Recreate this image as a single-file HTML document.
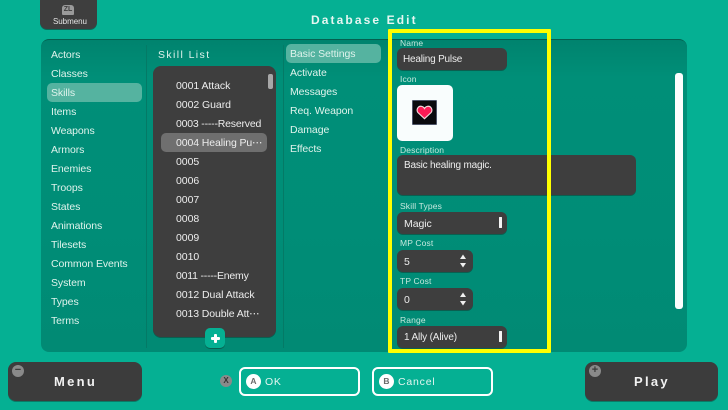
<!DOCTYPE html>
<html><head><meta charset="utf-8"><style>
*{box-sizing:border-box;margin:0;padding:0}
html,body{width:728px;height:410px;overflow:hidden}
body{position:relative;background:#05b093;font-family:"Liberation Sans","DejaVu Sans",sans-serif;color:#e6f4ef}
.a{position:absolute}
.t{position:absolute;font-size:10.5px;line-height:14px;letter-spacing:-.08px;white-space:nowrap;color:#dff3ec}
.l{position:absolute;font-size:8.5px;line-height:10px;letter-spacing:.14px;color:#c5e8de;left:400px;white-space:nowrap}
.box{position:absolute;background:#3e3e3e;border-radius:6px;box-shadow:0 1px 0 #0a5f50}
.v{position:absolute;font-size:10.5px;line-height:14px;letter-spacing:-.05px;margin-top:1px;color:#ededed;white-space:nowrap}
.bar{position:absolute;width:3px;height:11px;background:#f4f4f4;left:499px;border-radius:.5px}
.btn{position:absolute;background:#3c3c3c;border-radius:8px;box-shadow:0 1px 0 #0a7a66;height:39px;top:362px}
.big{position:absolute;font-size:13px;font-weight:bold;letter-spacing:2.3px;color:#f2f2f2;line-height:18px;white-space:nowrap}
.dot{position:absolute;width:12px;height:12px;border-radius:50%;background:#8a8a8a;color:#3c3c3c;font-size:11px;font-weight:bold;line-height:11px;text-align:center}
.ol{position:absolute;top:367px;height:29px;width:121px;border:2px solid #fff;border-radius:6px}
.c{position:absolute;width:15px;height:15px;border-radius:50%;background:#fff;color:#6a6a6a;font-size:8.5px;font-weight:bold;line-height:15px;text-align:center;top:374px}
</style></head><body>

<div class="a" style="left:40px;top:-6px;width:57px;height:35px;background:#3e3e3e;border-radius:7px;box-shadow:0 1px 0 #0a6b5a"></div>
<div class="a" style="left:62px;top:5px;width:12px;height:10px;background:#9a9a9a;border-radius:3px 3px 1px 1px;color:#3e3e3e;font-size:7px;font-weight:bold;line-height:10px;text-align:center">ZL</div>
<div class="t" style="left:53px;top:15px;font-size:8px;letter-spacing:-.05px;color:#e6e6e6">Submenu</div>

<div class="t" style="left:311px;top:12px;font-size:12px;line-height:16px;font-weight:bold;letter-spacing:2.1px;color:#e6f6f1">Database Edit</div>

<div class="a" style="left:41px;top:39px;width:646px;height:313px;border-radius:8px;background:linear-gradient(#00836e,#008f78 12%,#008d77 60%,#018a74);border-top:1px solid #04604f"></div>
<div class="a" style="left:146px;top:45px;width:1px;height:303px;background:#047a66"></div>
<div class="a" style="left:283px;top:45px;width:1px;height:303px;background:#047a66"></div>

<div class="a" style="left:47px;top:83px;width:95px;height:19px;border-radius:5px;background:#55b3a0"></div>
<div class="t" style="left:51px;top:48px">Actors</div>
<div class="t" style="left:51px;top:67px">Classes</div>
<div class="t" style="left:51px;top:86px">Skills</div>
<div class="t" style="left:51px;top:105px">Items</div>
<div class="t" style="left:51px;top:124px">Weapons</div>
<div class="t" style="left:51px;top:143px">Armors</div>
<div class="t" style="left:51px;top:162px">Enemies</div>
<div class="t" style="left:51px;top:181px">Troops</div>
<div class="t" style="left:51px;top:200px">States</div>
<div class="t" style="left:51px;top:219px">Animations</div>
<div class="t" style="left:51px;top:238px">Tilesets</div>
<div class="t" style="left:51px;top:257px">Common Events</div>
<div class="t" style="left:51px;top:276px">System</div>
<div class="t" style="left:51px;top:295px">Types</div>
<div class="t" style="left:51px;top:314px">Terms</div>

<div class="t" style="left:158px;top:48px;letter-spacing:1.4px">Skill List</div>
<div class="box" style="left:153px;top:66px;width:123px;height:271px;border-radius:8px"></div>
<div class="a" style="left:161px;top:133px;width:106px;height:19px;border-radius:5px;background:#6f6f6f"></div>
<div class="a" style="left:268px;top:74px;width:5px;height:15px;border-radius:2px;background:#a8a8a8"></div>
<div class="v" style="left:176px;top:78px">0001 Attack</div>
<div class="v" style="left:176px;top:97px">0002 Guard</div>
<div class="v" style="left:176px;top:116px;letter-spacing:-.2px">0003 -----Reserved</div>
<div class="v" style="left:176px;top:135px;letter-spacing:-.1px">0004 Healing Pu⋯</div>
<div class="v" style="left:176px;top:154px">0005</div>
<div class="v" style="left:176px;top:173px">0006</div>
<div class="v" style="left:176px;top:192px">0007</div>
<div class="v" style="left:176px;top:211px">0008</div>
<div class="v" style="left:176px;top:230px">0009</div>
<div class="v" style="left:176px;top:249px">0010</div>
<div class="v" style="left:176px;top:268px;letter-spacing:-.2px">0011 -----Enemy</div>
<div class="v" style="left:176px;top:287px">0012 Dual Attack</div>
<div class="v" style="left:176px;top:306px;letter-spacing:-.1px">0013 Double Att⋯</div>
<div class="a" style="left:205px;top:328px;width:20px;height:20px;border-radius:5px;background:#05b093;box-shadow:0 1px 0 #0a5f50"></div>
<div class="a" style="left:210.5px;top:336.5px;width:9px;height:3px;background:#fff;border-radius:1px"></div>
<div class="a" style="left:213.5px;top:333.5px;width:3px;height:9px;background:#fff;border-radius:1px"></div>

<div class="a" style="left:286px;top:44px;width:95px;height:19px;border-radius:5px;background:#55b3a0"></div>
<div class="t" style="left:290px;top:47px">Basic Settings</div>
<div class="t" style="left:290px;top:66px">Activate</div>
<div class="t" style="left:290px;top:85px">Messages</div>
<div class="t" style="left:290px;top:104px">Req. Weapon</div>
<div class="t" style="left:290px;top:123px">Damage</div>
<div class="t" style="left:290px;top:142px">Effects</div>

<div class="l" style="top:38px">Name</div>
<div class="box" style="left:397px;top:48px;width:110px;height:22px"></div>
<div class="v" style="left:403px;top:52px;font-size:10px;letter-spacing:-.2px">Healing Pulse</div>

<div class="l" style="top:74px">Icon</div>
<div class="a" style="left:397px;top:85px;width:56px;height:56px;background:#f9fdfd;border-radius:5px"></div>
<div class="a" style="left:412px;top:100px;width:25px;height:25px;background:#0a0a0e;border:1.5px solid #4d5468;border-radius:1px"></div>
<svg class="a" style="left:416px;top:105px" width="17" height="15" viewBox="0 0 19 17"><path d="M9.5 15.5 L2 8.5 Q0.5 6.5 1.5 4 Q3 1 6 1.5 Q8.5 2 9.5 4 Q10.5 2 13 1.5 Q16 1 17.5 4 Q18.5 6.5 17 8.5 Z" fill="#fb1a55" stroke="#f5d7dc" stroke-width="1.3"/></svg>

<div class="l" style="top:145px">Description</div>
<div class="box" style="left:397px;top:155px;width:239px;height:40px"></div>
<div class="v" style="left:404px;top:158px;font-size:10px;letter-spacing:-.2px">Basic healing magic.</div>

<div class="l" style="top:201px">Skill Types</div>
<div class="box" style="left:397px;top:212px;width:110px;height:22px"></div>
<div class="v" style="left:404px;top:216px">Magic</div>
<div class="bar" style="top:217px"></div>

<div class="l" style="top:238px">MP Cost</div>
<div class="box" style="left:397px;top:250px;width:76px;height:22px"></div>
<div class="v" style="left:404px;top:254px">5</div>
<svg class="a" style="left:459px;top:254px" width="8" height="14" viewBox="0 0 8 14"><path d="M4 0.5 L7 5 H1Z M4 13.5 L1 9 H7Z" fill="#f0f0f0"/></svg>

<div class="l" style="top:276px">TP Cost</div>
<div class="box" style="left:397px;top:288px;width:76px;height:22px"></div>
<div class="v" style="left:404px;top:292px">0</div>
<svg class="a" style="left:459px;top:292px" width="8" height="14" viewBox="0 0 8 14"><path d="M4 0.5 L7 5 H1Z M4 13.5 L1 9 H7Z" fill="#f0f0f0"/></svg>

<div class="l" style="top:315px">Range</div>
<div class="box" style="left:397px;top:326px;width:110px;height:22px"></div>
<div class="v" style="left:404px;top:330px;font-size:10px;letter-spacing:-.15px">1 Ally (Alive)</div>
<div class="bar" style="top:331px"></div>

<div class="a" style="left:675px;top:73px;width:8px;height:236px;border-radius:3px;background:#fbfefd"></div>

<div class="a" style="left:388px;top:29px;width:163px;height:324px;border:4px solid #ffff00;border-radius:1px"></div>

<div class="btn" style="left:8px;width:134px"></div>
<div class="dot" style="left:12px;top:365px">−</div>
<div class="big" style="left:54px;top:373px">Menu</div>

<div class="dot" style="left:220px;top:375px;font-size:8px;line-height:12px;color:#333">X</div>
<div class="ol" style="left:239px"></div>
<div class="c" style="left:246px">A</div>
<div class="t" style="left:265px;top:375px;letter-spacing:.7px;color:#e4f6f1">OK</div>

<div class="ol" style="left:372px"></div>
<div class="c" style="left:379px">B</div>
<div class="t" style="left:398px;top:375px;letter-spacing:.8px;color:#e4f6f1">Cancel</div>

<div class="btn" style="left:585px;width:133px"></div>
<div class="dot" style="left:589px;top:365px">+</div>
<div class="big" style="left:634px;top:373px">Play</div>
</body></html>
